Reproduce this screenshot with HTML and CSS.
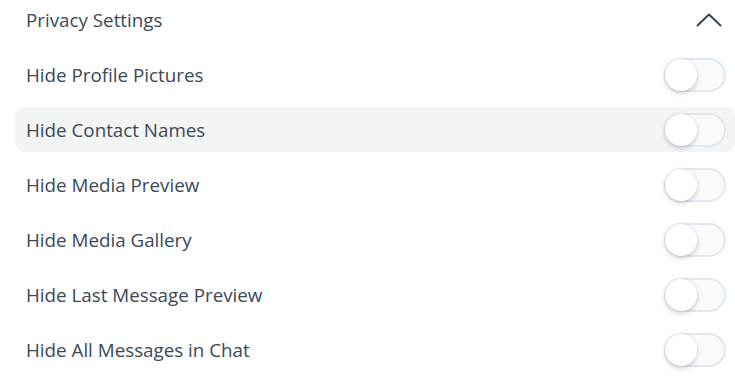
FILE: index.html
```html
<!DOCTYPE html>
<html lang="en">
<head>
  <meta charset="UTF-8" />
  <meta name="viewport" content="width=device-width, initial-scale=1.0"/>
  <title>Privacy Settings</title>
  <link rel="stylesheet" href="styles.css">
</head>
<body>
  <div class="panel">
    <div class="panel-header">
      <span class="panel-title">Privacy Settings</span>
      <svg class="chevron" width="26" height="14" viewBox="0 0 26 14" fill="none">
        <path d="M1.5 12.5 L13 1.5 L24.5 12.5" stroke="#334155" stroke-width="1.9" stroke-linecap="round" stroke-linejoin="round"/>
      </svg>
    </div>
    <div class="options">
      <label class="option">
        <span>Hide Profile Pictures</span>
        <input type="checkbox" class="switch">
      </label>
      <label class="option hovered">
        <span>Hide Contact Names</span>
        <input type="checkbox" class="switch">
      </label>
      <label class="option">
        <span>Hide Media Preview</span>
        <input type="checkbox" class="switch">
      </label>
      <label class="option">
        <span>Hide Media Gallery</span>
        <input type="checkbox" class="switch">
      </label>
      <label class="option">
        <span>Hide Last Message Preview</span>
        <input type="checkbox" class="switch">
      </label>
      <label class="option">
        <span>Hide All Messages in Chat</span>
        <input type="checkbox" class="switch">
      </label>
    </div>
  </div>
</body>
</html>
```
FILE: styles.css
```css
body {
  margin: 0;
  background: #fff;
  font-family: 'Open Sans', 'Noto Sans', sans-serif;
  color: #3b4858;
}

.panel {
  padding-left: 15px;
  width: 720px;
}

.panel-header {
  display: flex;
  justify-content: space-between;
  align-items: center;
  height: 40px;
  padding: 0 11px;
  margin-bottom: 12px;
}

.panel-title {
  font-size: 18.8px;
}

.chevron {
  display: block;
  margin-right: 2px;
}

.options {
  display: flex;
  flex-direction: column;
  gap: 10px;
}

.option {
  display: flex;
  justify-content: space-between;
  align-items: center;
  height: 45px;
  padding: 0 9px 0 11px;
  border-radius: 9px;
  font-size: 18.8px;
  cursor: pointer;
}

.hovered {
  background: #f3f4f4;
}

.switch {
  appearance: none;
  margin: 0;
  position: relative;
  width: 62px;
  height: 34px;
  border: 2px solid #e2e8f0;
  border-radius: 17px;
  background: #f8fafc;
  cursor: pointer;
}

.switch::before {
  content: '';
  position: absolute;
  left: -1px;
  top: 0;
  width: 32px;
  height: 32px;
  margin-top: -1px;
  border-radius: 50%;
  background: #fff;
  box-shadow: 0 2px 5px rgba(15, 23, 42, 0.22);
}
```
